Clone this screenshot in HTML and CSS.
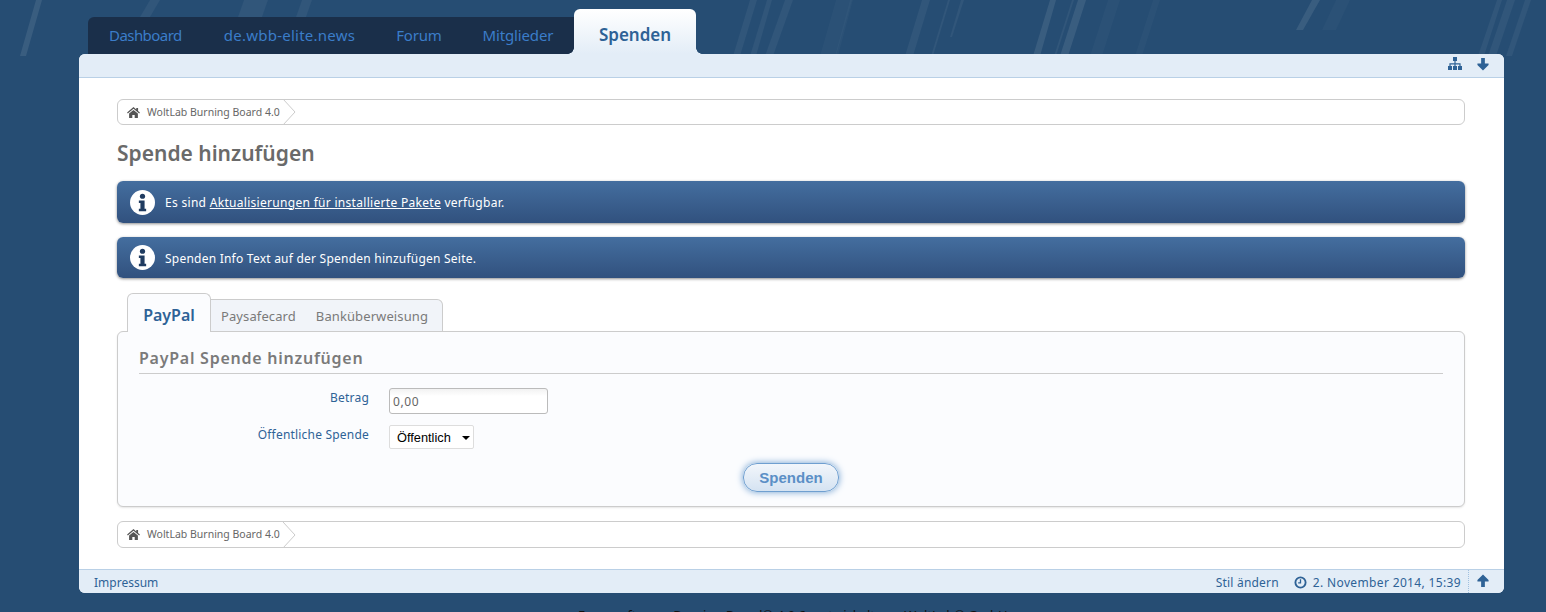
FILE: index.html
```html
<!DOCTYPE html>
<html lang="de">
<head>
<meta charset="utf-8">
<title>Spende hinzufügen</title>
<link rel="stylesheet" href="styles.css">
</head>
<body>
<svg class="streaks" viewBox="0 0 1546 56" aria-hidden="true">
  <polygon class="s1" points="20,56 36,0 42,0 26,56"/>
  <polygon class="s2" points="140,17 150,0 160,0 150,17"/>
  <polygon class="s2" points="238,17 244,0 268,0 262,17"/>
  <polygon class="s2" points="296,17 302,0 312,0 306,17"/>
  <polygon class="s2" points="733,56 750,0 757,0 740,56"/>
  <polygon class="s2" points="750,56 767,0 772,0 756,56"/>
  <polygon class="s2" points="765,56 785,0 793,0 773,56"/>
  <polygon class="s3" points="820,56 836,0 852,0 836,56"/>
  <polygon class="s3" points="835,56 850,0 853,0 838,56"/>
  <polygon class="s2" points="905,56 922,0 930,0 913,56"/>
  <polygon class="s2" points="931,56 948,0 950,0 933,56"/>
  <polygon class="s2" points="950,37 961,0 964,0 952,37"/>
  <polygon class="s1" points="1033,56 1050,0 1056,0 1040,56"/>
  <polygon class="s2" points="1054,56 1072,0 1074,0 1056,56"/>
  <polygon class="s1" points="1060,56 1078,0 1086,0 1068,56"/>
  <polygon class="s3" points="1090,56 1108,0 1120,0 1102,56"/>
  <polygon class="s3" points="1135,56 1153,0 1160,0 1142,56"/>
  <polygon class="s1" points="1296,30 1312,0 1320,0 1303,30"/>
  <polygon class="s3" points="1322,30 1336,0 1350,0 1336,30"/>
  <polygon class="s2" points="1478,56 1497,0 1502,0 1484,56"/>
  <polygon class="s2" points="1488,56 1507,0 1515,0 1496,56"/>
  <polygon class="s2" points="1506,56 1525,0 1531,0 1512,56"/>
</svg>
<nav class="mainnav">
  <ul class="tabs">
    <li class="tab t1"><a href="#">Dashboard</a></li>
    <li class="tab t2"><a href="#">de.wbb-elite.news</a></li>
    <li class="tab t3"><a href="#">Forum</a></li>
    <li class="tab t4"><a href="#">Mitglieder</a></li>
  </ul>
  <a class="tab-active" href="#">Spenden</a>
</nav>
<div class="wrapper">
  <div class="topbar">
    <svg class="ic ic-map" viewBox="0 0 16 14"><path d="M6 0h4v4H8.600v2.200h5V9H15v4h-4V9h1.400V7.400H8.600V9H10v4H6V9h1.400V7.400H3.600V9H5v4H1V9h1.400V6.200h5V4H6z"/></svg>
    <svg class="ic ic-arrow" viewBox="0 0 14 14"><path d="M5 0h4v6h4v1.500L7 13.500 1 7.500V6h4z"/></svg>
  </div>
  <main class="content">
    <div class="crumbs">
      <svg class="home" viewBox="0 0 14 12"><path d="M7 0l3 2.600V1h2v3.300L14 6l-.8 1L7 1.800.8 7 0 6zM2.200 7.200L7 3.200l4.800 4V12H8.300V8.800H5.700V12H2.200z"/></svg>
      <a href="#">WoltLab Burning Board 4.0</a>
      <svg class="chev" viewBox="0 0 14 26" preserveAspectRatio="none"><polyline points="0,0 12,13 0,26"/></svg>
    </div>
    <h1>Spende hinzufügen</h1>
    <div class="info first">
      <svg class="info-ic" viewBox="0 0 24 24"><circle cx="12" cy="12" r="12" fill="#fff"/><circle cx="12" cy="6" r="2.500" fill="#1f3b60"/><path fill="#1f3b60" d="M8.500 10h5.500v8h1.500v2.500h-7V18H10v-5.500H8.500z"/></svg>
      <p>Es sind <a href="#">Aktualisierungen für installierte Pakete</a> verfügbar.</p>
    </div>
    <div class="info second">
      <svg class="info-ic" viewBox="0 0 24 24"><circle cx="12" cy="12" r="12" fill="#fff"/><circle cx="12" cy="6" r="2.500" fill="#1f3b60"/><path fill="#1f3b60" d="M8.500 10h5.500v8h1.500v2.500h-7V18H10v-5.500H8.500z"/></svg>
      <p>Spenden Info Text auf der Spenden hinzufügen Seite.</p>
    </div>
    <div class="tabmenu">
      <a class="sub active" href="#">PayPal</a>
      <div class="subs">
        <a class="sub p1" href="#">Paysafecard</a>
        <a class="sub p2" href="#">Banküberweisung</a>
      </div>
    </div>
    <section class="panel">
      <h2>PayPal Spende hinzufügen</h2>
      <div class="row row-a">
        <label for="amt">Betrag</label>
        <input id="amt" type="text" value="0,00">
      </div>
      <div class="row row-b">
        <label for="pub">Öffentliche Spende</label>
        <span class="select" id="pub">Öffentlich<i class="caret"></i></span>
      </div>
      <div class="submit"><button type="button">Spenden</button></div>
    </section>
    <div class="crumbs lower">
      <svg class="home" viewBox="0 0 14 12"><path d="M7 0l3 2.600V1h2v3.300L14 6l-.8 1L7 1.800.8 7 0 6zM2.200 7.200L7 3.200l4.800 4V12H8.300V8.800H5.700V12H2.200z"/></svg>
      <a href="#">WoltLab Burning Board 4.0</a>
      <svg class="chev" viewBox="0 0 14 26" preserveAspectRatio="none"><polyline points="0,0 12,13 0,26"/></svg>
    </div>
  </main>
  <footer class="foot">
    <a href="#">Impressum</a>
    <div class="foot-right">
      <a class="style" href="#">Stil ändern</a>
      <span class="date"><svg class="clock" viewBox="0 0 14 14"><circle cx="7" cy="7" r="5.500" fill="none" stroke="#2e6296" stroke-width="2"/><path d="M7 3.500V7.500H4.500" fill="none" stroke="#2e6296" stroke-width="1.400"/></svg>2. November 2014, 15:39</span>
      <span class="up"><svg class="ic" viewBox="0 0 14 14"><path d="M5 14V8H1V6.500L7 .5l6 6V8H9v6z"/></svg></span>
    </div>
  </footer>
</div>
<p class="copy">Forensoftware: Burning Board® 4.0.6, entwickelt von WoltLab® GmbH</p>
</body>
</html>
```
FILE: styles.css
```css
* { box-sizing: border-box; }
html, body { height: 612px; overflow: hidden; }
body {
  margin: 0;
  background: #264d73;
  font-family: "Noto Sans", "DejaVu Sans", sans-serif;
  font-size: 12px;
  color: #666;
  padding: 9px 42px 0 79px;
  position: relative;
}
a { color: inherit; text-decoration: none; }
.streaks { position: absolute; left: 0; top: 0; width: 1546px; height: 56px; }
.s1 { fill: #fff; opacity: .09; }
.s2 { fill: #fff; opacity: .05; }
.s3 { fill: #fff; opacity: .025; }
.mainnav { display: flex; align-items: flex-end; height: 45px; margin-left: 9px; position: relative; }
.tabs {
  display: flex; list-style: none; margin: 0; padding: 0;
  width: 486px; height: 37px; background: #1a2f4a; border-radius: 6px 0 6px 0;
}
.tab a { display: block; line-height: 37px; font-size: 15px; color: #3b7dc9; }
.t1 { margin-left: 21px; letter-spacing: -.55px; }
.t2 { margin-left: 42px; letter-spacing: .25px; }
.t3 { margin-left: 41px; letter-spacing: -.2px; }
.t4 { margin-left: 41px; letter-spacing: -.15px; }
.tab-active {
  position: relative;
  width: 122px; height: 45px; text-align: center; line-height: 51px;
  font-size: 17px; font-weight: 600; color: #2e6296;
  background: linear-gradient(#fff, #e3edf7); border-radius: 6px 6px 0 0;
}
.tab-active::before, .tab-active::after {
  content: ""; position: absolute; bottom: 0; width: 6px; height: 6px;
}
.tab-active::before { left: -6px; background: radial-gradient(circle at 0 0, transparent 5.500px, #e3edf7 6px); }
.tab-active::after { right: -6px; background: radial-gradient(circle at 100% 0, transparent 5.500px, #e3edf7 6px); }
.wrapper { position: relative; width: 1425px; background: #fff; border-radius: 6px; }
.topbar {
  height: 24px; background: #e3edf7; border-bottom: 1px solid #b9d0e6; border-radius: 6px 6px 0 0;
  display: flex; justify-content: flex-end; align-items: center; gap: 13px; padding: 0 14px 3px 0;
}
.ic { width: 14px; height: 13px; fill: #2e6296; display: block; }
.ic-map { width: 16px; height: 14px; }
.ic-arrow { width: 14px; }
.content { height: 491px; padding: 21px 39px 0 38px; }
.crumbs {
  height: 26px; border: 1px solid #ccc; border-radius: 6px; display: flex; align-items: center;
  padding-left: 9px; font-size: 10.500px; color: #666; overflow: hidden;
}
.crumbs.lower { margin-top: 14px; height: 27px; padding-bottom: 1px; }
.home { width: 13px; height: 11px; fill: #555; margin-right: 7px; }
.chev { width: 14px; height: 26px; margin-left: 3px; flex: none; }
.chev polyline { fill: none; stroke: #ccc; stroke-width: 1; }
.crumbs.lower .chev { margin-bottom: -1px; }
h1 { margin: 14px 0 14px; font-size: 21px; line-height: 28px; font-weight: 600; color: #6a6a6a; }
.info {
  height: 42px; border-radius: 6px; display: flex; align-items: center; padding-left: 13px;
  background: linear-gradient(#446e9f, #31517e); box-shadow: 0 1px 3px rgba(0,0,0,.45); color: #fff;
}
.info.second { height: 41px; margin-top: 14px; }
.info.second p { padding-top: 1px; }
.info-ic { width: 25px; height: 25px; margin-right: 10px; flex: none; }
.info p { margin: 0; font-size: 12px; letter-spacing: .3px; }
.info.second p { letter-spacing: .23px; }
.info a { text-decoration: underline; }
.tabmenu { display: flex; align-items: flex-end; margin: 15px 0 0 10px; height: 39px; position: relative; z-index: 1; }
.sub { display: block; }
.sub.active {
  width: 84px; height: 39px; border: 1px solid #ccc; border-bottom: 0; border-radius: 6px 6px 0 0;
  background: #fbfcfe; color: #2e6296; font-size: 16px; font-weight: 600; text-align: center; line-height: 42px;
}
.subs {
  display: flex; width: 232px; height: 33px; border: 1px solid #ccc; border-left: 0; border-radius: 0 6px 0 0;
  background: #f1f4f9; color: #7a7a7a; font-size: 13px; letter-spacing: .1px; line-height: 32px; padding-left: 10px; gap: 20px;
}
.panel {
  height: 176px; margin-top: -1px; border: 1px solid #ccc; border-radius: 6px; background: #fbfcfe;
  padding: 13px 21px 0; box-shadow: 0 1px 2px rgba(0,0,0,.1);
}
h2 { margin: 0 0 14px; font-size: 16px; letter-spacing: .75px; line-height: 27px; height: 29px; font-weight: 600; color: #7a7a7a; border-bottom: 1px solid #ccc; }
.row { display: grid; grid-template-columns: 230px auto; column-gap: 20px; justify-content: start; }
.row label { text-align: right; color: #2e6296; font-size: 12px; letter-spacing: .2px; line-height: 18px; padding-top: 1px; }
.row-a { height: 26px; margin-bottom: 11px; }
.row-a input {
  width: 159px; height: 26px; border: 1px solid #bbb; border-radius: 3px; padding: 0 3px;
  font: 12px "Noto Sans", sans-serif; letter-spacing: .6px; color: #666; background: linear-gradient(#f2f2f2, #fff 30%);
}
.select {
  width: 85px; height: 24px; border: 1px solid #ddd; border-radius: 2px; background: #fff;
  font: 12.800px "Liberation Sans", sans-serif; color: #000; line-height: 24px; padding-left: 7px; position: relative; display: block;
}
.caret { position: absolute; right: 3px; top: 10px; border: 4px solid transparent; border-top-color: #000; border-bottom: 0; }
.submit { display: flex; justify-content: center; margin-top: 14px; }
button {
  width: 96px; height: 29px; border-radius: 14px; border: 1px solid #6f9fd0; background: linear-gradient(#f2f6fb, #d5e3f2);
  box-shadow: 0 0 7px #6f9fd0; color: #5b8fc6; font: 600 15px "Liberation Sans", sans-serif;
}
.foot {
  height: 24px; background: #e3edf7; border-top: 1px solid #b9d0e6; border-radius: 0 0 6px 6px;
  display: flex; justify-content: space-between; align-items: center; padding-left: 15px; color: #2e6296;
}
.foot > a, .style, .date { padding-top: 2px; }
.style { letter-spacing: .2px; }
.foot-right { display: flex; align-items: center; height: 100%; }
.date { display: flex; align-items: center; margin-left: 15px; letter-spacing: .35px; }
.clock { width: 13px; height: 13px; margin-right: 6px; }
.up { height: 100%; width: 36px; margin-left: 7px; border-left: 1px dotted #9fc0df; display: flex; align-items: center; justify-content: center; padding: 0 8px 3px 0; }
.copy { margin: 13px 0 0 499px; color: #111; font-size: 13px; white-space: nowrap; }
```
